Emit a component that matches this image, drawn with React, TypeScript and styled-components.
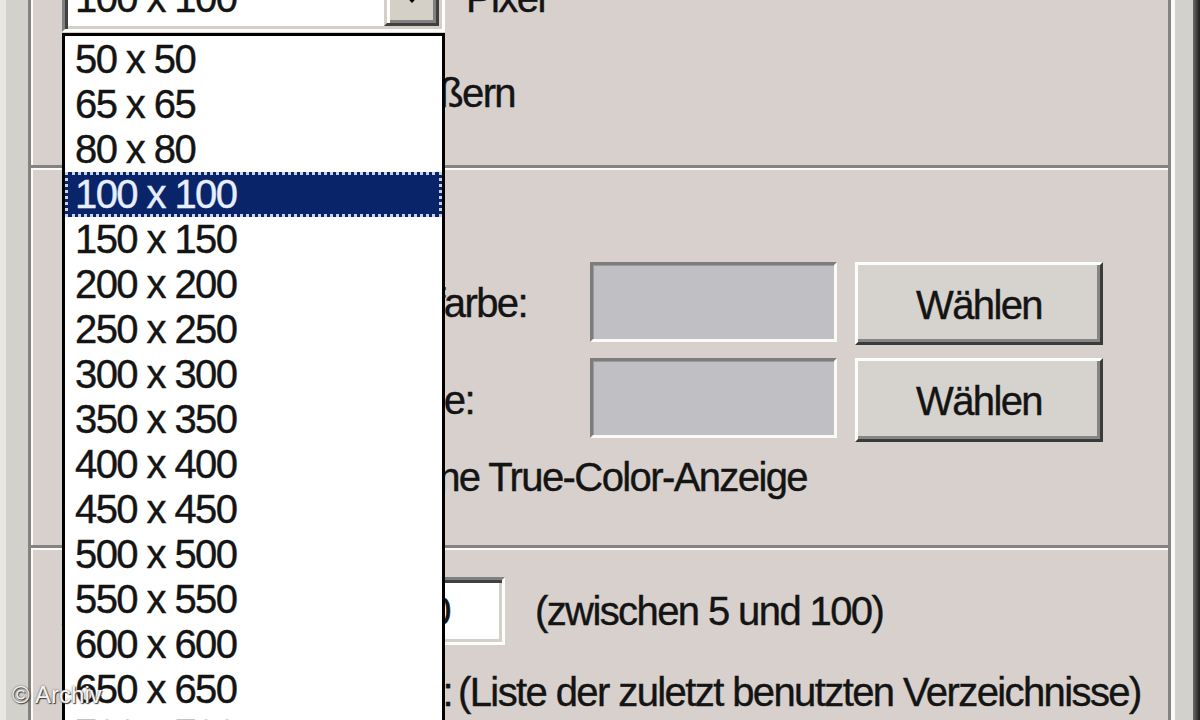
import React from "react";
import styled, { createGlobalStyle, css } from "styled-components";

const Global = createGlobalStyle`
  html, body { margin: 0; padding: 0; background: #d4d2cd; }
  body { font-family: "Liberation Sans", Arial, sans-serif; }
`;

const Screen = styled.div`
  position: relative;
  width: 1200px;
  height: 720px;
  overflow: hidden;
  display: flex;
  background: #d4d2cd;
  font-family: "Liberation Sans", Arial, sans-serif;
  font-size: 40px;
  letter-spacing: -1.6px;
  color: #141414;
  -webkit-text-stroke: 0.4px currentColor;
`;

const LeftEdge = styled.div`
  width: 6px;
  flex-shrink: 0;
  background: #e9e7e3;
`;

const Gutter = styled.div<{ $w: number; $lit?: boolean }>`
  width: ${(p) => p.$w}px;
  flex-shrink: 0;
  box-sizing: border-box;
  background: #d3d1cc;
  ${(p) => p.$lit && css`border-left: 4px solid #fafafa;`}
`;

const RightEdge = styled.div`
  width: 7px;
  flex-shrink: 0;
  background: linear-gradient(90deg, #6a6a6a, #1c1c1c);
`;

const Panel = styled.div`
  width: 1143px;
  flex-shrink: 0;
  box-sizing: border-box;
  display: flex;
  flex-direction: column;
  background: #d7d0cc;
  border-left: 3px solid #85827f;
  border-right: 3px solid #85827f;
  box-shadow: inset 2px 0 0 #fbfbfb;
`;

const Section = styled.section<{ $h?: number }>`
  display: flex;
  flex-direction: column;
  flex-shrink: 0;
  ${(p) => (p.$h ? css`height: ${p.$h}px;` : css`flex: 1;`)}
  padding-left: 31px;
`;

const Divider = styled.div`
  flex-shrink: 0;
  height: 2px;
  border-top: 3px solid #85827f;
  background: #fbfbfb;
`;

/* ---------- combo box ---------- */
const ComboRow = styled.div`
  display: flex;
  align-items: flex-start;
  gap: 21px;
  margin-top: -46px;
`;

const ComboBox = styled.div`
  position: relative;
  width: 383px;
  height: 78px;
  box-sizing: border-box;
  display: flex;
  background: #fff;
  border: 3px solid;
  border-color: #808080 #fdfdfd #fdfdfd #808080;
  box-shadow: inset 3px 3px 0 #404040, inset -3px -3px 0 #d4d0c8;
  padding: 3px;
`;

const ComboField = styled.div`
  flex: 1;
  padding: 16px 0 0 7px;
  line-height: 45px;
  white-space: nowrap;
`;

const DropButton = styled.div`
  width: 55px;
  box-sizing: border-box;
  display: flex;
  align-items: center;
  justify-content: center;
  background: #d4d0c8;
  border: 3px solid;
  border-color: #d4d0c8 #404040 #404040 #d4d0c8;
  box-shadow: inset 3px 3px 0 #fff, inset -3px -3px 0 #808080;
`;

const Arrow = styled.span`
  width: 0;
  height: 0;
  margin-top: 6px;
  border-left: 12px solid transparent;
  border-right: 12px solid transparent;
  border-top: 13px solid #000;
`;

const DropList = styled.div`
  position: absolute;
  left: -3px;
  top: calc(100% + 4px);
  width: 383px;
  height: 720px;
  box-sizing: border-box;
  z-index: 5;
  background: #fff;
  border: 3px solid #000;
  padding-top: 1px;
`;

const Option = styled.div<{ $selected?: boolean }>`
  height: 45px;
  box-sizing: border-box;
  line-height: 45px;
  padding-left: 10px;
  white-space: nowrap;
  ${(p) =>
    p.$selected &&
    css`
      background: #0a246a;
      color: #e6eeff;
      border: 3px dotted #c9d3ee;
      line-height: 39px;
      padding-left: 7px;
    `}
`;

const Text = styled.span<{ $top?: number; $left?: number }>`
  line-height: 45px;
  white-space: nowrap;
  ${(p) => p.$top !== undefined && css`margin-top: ${p.$top}px;`}
  ${(p) => p.$left !== undefined && css`margin-left: ${p.$left}px;`}
`;

/* ---------- check rows ---------- */
const CheckRow = styled.div<{ $top: number }>`
  display: flex;
  align-items: center;
  gap: 14px;
  padding-left: 13px;
  margin-top: ${(p) => p.$top}px;
  height: 45px;
`;

const CheckBox = styled.span`
  width: 36px;
  height: 36px;
  flex-shrink: 0;
  box-sizing: border-box;
  background: #fff;
  border: 3px solid;
  border-color: #808080 #fdfdfd #fdfdfd #808080;
  box-shadow: inset 3px 3px 0 #404040;
`;

const RightLabel = styled.span<{ $w: number }>`
  width: ${(p) => p.$w}px;
  flex-shrink: 0;
  text-align: right;
  line-height: 45px;
  white-space: nowrap;
`;

/* ---------- color rows ---------- */
const ColorRow = styled.div<{ $top: number }>`
  display: grid;
  grid-template-columns: 510px 247px 248px;
  column-gap: 18px;
  align-items: start;
  margin-top: ${(p) => p.$top}px;
`;

const RowLabel = styled.div<{ $h: number; $trim: number }>`
  height: ${(p) => p.$h}px;
  display: flex;
  align-items: center;
  justify-content: flex-end;
  padding-right: ${(p) => p.$trim}px;
  line-height: 45px;
  white-space: nowrap;
`;

const Swatch = styled.div`
  height: 80px;
  box-sizing: border-box;
  background: #c0c0c4;
  border: 3px solid;
  border-color: #7d7d7d #fafafa #fafafa #7d7d7d;
  box-shadow: inset 1px 1px 0 #9a9a9a;
`;

const PushButton = styled.div<{ $h: number }>`
  height: ${(p) => p.$h}px;
  box-sizing: border-box;
  display: flex;
  align-items: center;
  justify-content: center;
  background: #d6d2ce;
  border: 3px solid;
  border-color: #fdfdfd #3a3a3a #3a3a3a #fdfdfd;
  box-shadow: inset -3px -3px 0 #858585;
  line-height: 45px;
  padding-top: 3px;
`;

/* ---------- numeric rows ---------- */
const NumRow = styled.div<{ $top: number }>`
  display: grid;
  grid-template-columns: 288px 125px auto;
  column-gap: 30px;
  justify-content: start;
  align-items: center;
  margin-top: ${(p) => p.$top}px;
`;

const Edit = styled.div`
  height: 68px;
  box-sizing: border-box;
  display: flex;
  align-items: center;
  background: #fff;
  border: 3px solid;
  border-color: #808080 #fdfdfd #fdfdfd #808080;
  box-shadow: inset 3px 3px 0 #404040, inset -3px -3px 0 #d4d0c8;
  padding-left: 5px;
  line-height: 45px;
`;

const HistoryRow = styled.div<{ $top: number }>`
  display: flex;
  align-items: center;
  margin-top: ${(p) => p.$top}px;
  height: 45px;
`;

const Watermark = styled.div`
  position: absolute;
  left: 12px;
  top: 681px;
  z-index: 10;
  font-size: 24px;
  letter-spacing: 0;
  color: #f4f4f4;
  -webkit-text-stroke: 0;
  text-shadow: 0 0 2px #555, 1px 1px 1px #333;
  white-space: nowrap;
`;

const sizes = [
  50, 65, 80, 100, 150, 200, 250, 300, 350, 400, 450, 500, 550, 600, 650, 700, 750,
];

export default function App() {
  return (
    <>
      <Global />
      <Screen>
        <LeftEdge />
        <Gutter $w={22} />
        <Panel>
          <Section $h={165}>
            <ComboRow>
              <ComboBox>
                <ComboField>100 x 100</ComboField>
                <DropButton>
                  <Arrow />
                </DropButton>
                <DropList>
                  {sizes.map((s) => (
                    <Option key={s} $selected={s === 100}>
                      {s} x {s}
                    </Option>
                  ))}
                </DropList>
              </ComboBox>
              <Text $top={22}>Pixel</Text>
            </ComboRow>
            <CheckRow $top={39}>
              <CheckBox />
              <RightLabel $w={390}>Bilder vergrößern</RightLabel>
            </CheckRow>
          </Section>
          <Divider />
          <Section $h={375}>
            <ColorRow $top={92}>
              <RowLabel $h={83} $trim={45}>
                Hintergrundfarbe:
              </RowLabel>
              <Swatch />
              <PushButton $h={83}>Wählen</PushButton>
            </ColorRow>
            <ColorRow $top={13}>
              <RowLabel $h={84} $trim={98}>
                Rahmenlinie:
              </RowLabel>
              <Swatch />
              <PushButton $h={84}>Wählen</PushButton>
            </ColorRow>
            <CheckRow $top={13}>
              <CheckBox />
              <RightLabel $w={682}>Farbpalette ohne True-Color-Anzeige</RightLabel>
            </CheckRow>
          </Section>
          <Divider />
          <Section>
            <NumRow $top={27}>
              <Text>Anzahl:</Text>
              <Edit>100</Edit>
              <Text>(zwischen 5 und 100)</Text>
            </NumRow>
            <HistoryRow $top={25}>
              <RightLabel $w={390}>Verlauf:</RightLabel>
              <Text $left={6}>(Liste der zuletzt benutzten Verzeichnisse)</Text>
            </HistoryRow>
          </Section>
        </Panel>
        <Gutter $w={22} $lit />
        <RightEdge />
        <Watermark>© Archiv</Watermark>
      </Screen>
    </>
  );
}
